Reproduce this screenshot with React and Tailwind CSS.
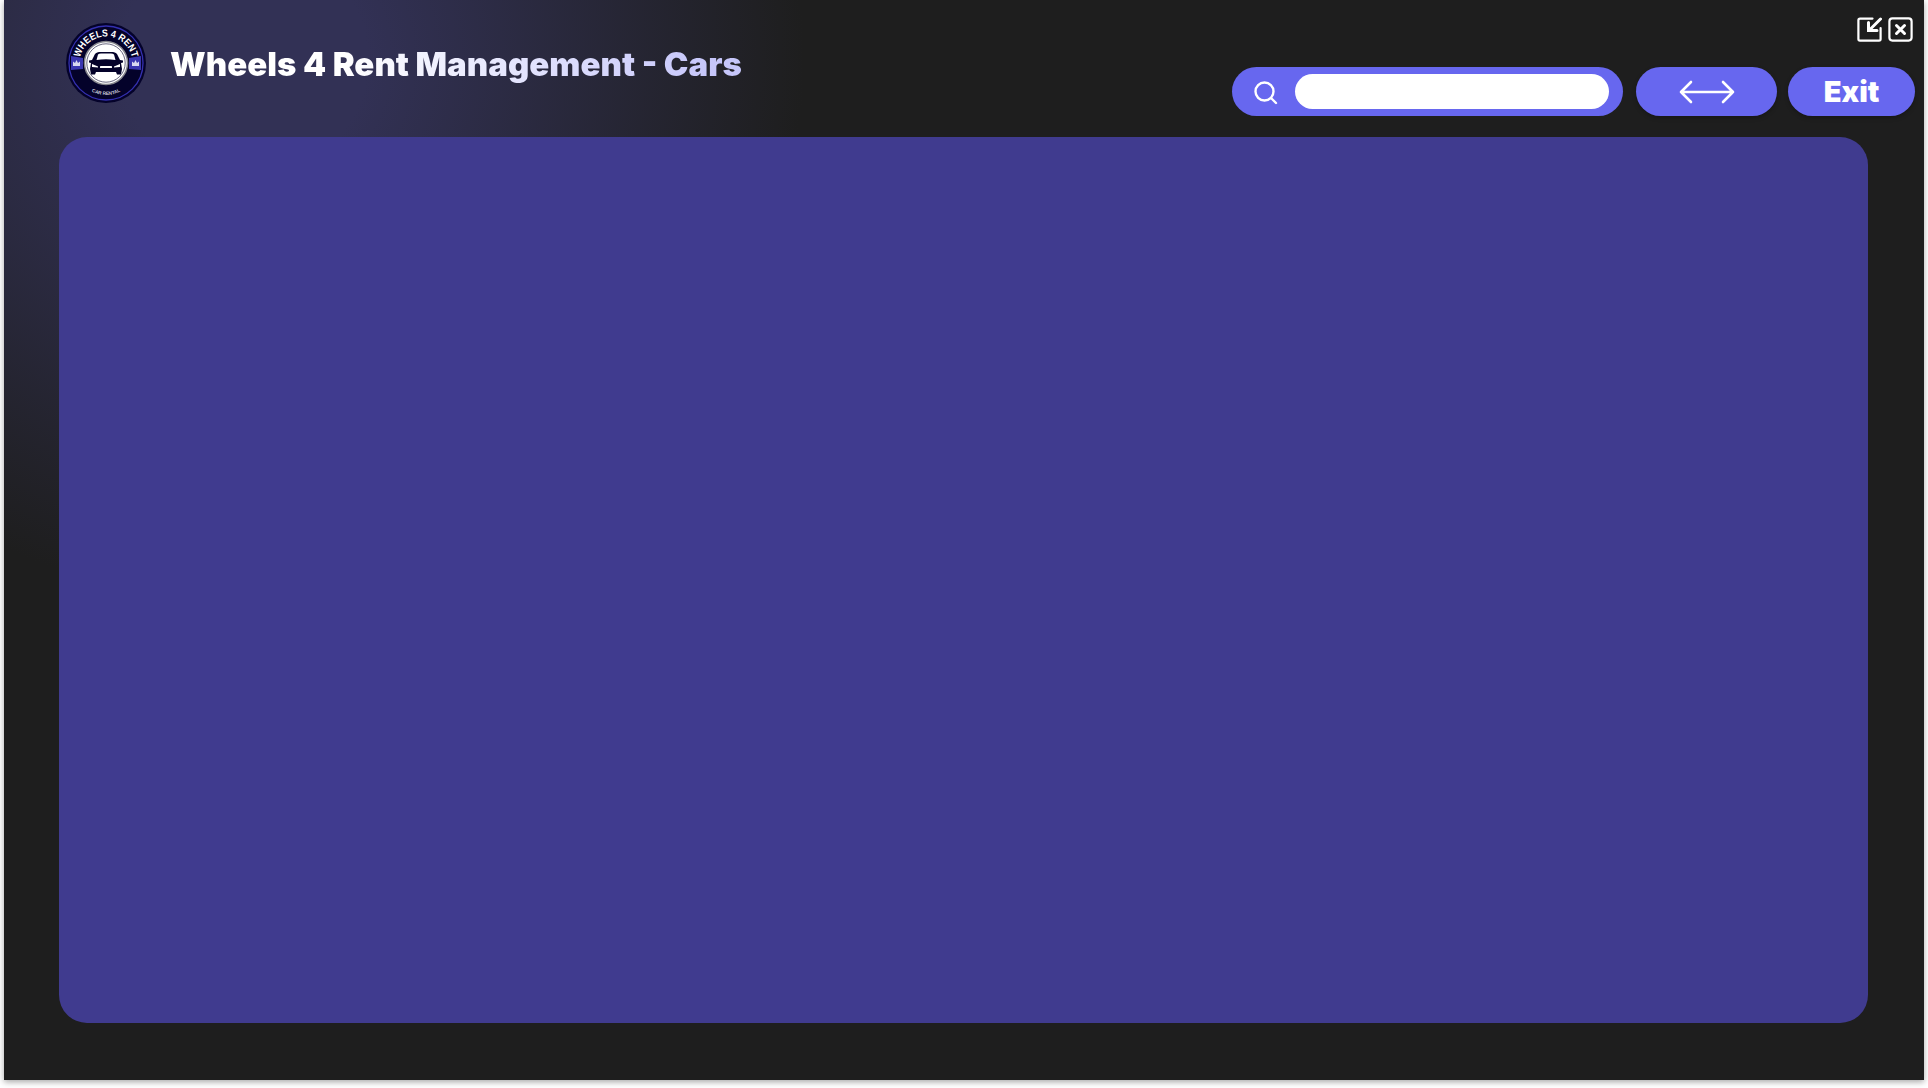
import React from "react";

function Logo() {
  return (
    <svg width="80" height="80" viewBox="0 0 80 80" className="shrink-0">
      <defs>
        <path id="arcTop" d="M 13.5 40 A 26.5 26.5 0 0 1 66.5 40" fill="none" />
        <path id="arcBot" d="M 8 40 A 32 32 0 0 0 72 40" fill="none" />
      </defs>
      <circle cx="40" cy="40" r="40" fill="#04022a" />
      <circle cx="40" cy="40" r="37" fill="none" stroke="#3430b0" strokeWidth="1.3" />
      <polygon points="5,33 17,35 17,46 5,47" fill="#3a36b0" />
      <polygon points="75,33 63,35 63,46 75,47" fill="#3a36b0" />
      <path d="M7 43 L7 38.5 L9 40 L10.5 37 L12 40 L14 38.5 L14 43 Z" fill="#d8d8f0" />
      <path d="M66 43 L66 38.5 L68 40 L69.5 37 L71 40 L73 38.5 L73 43 Z" fill="#d8d8f0" />
      <text fill="#ffffff" fontSize="10" fontWeight="700" fontFamily="'Liberation Sans',sans-serif">
        <textPath href="#arcTop" startOffset="50%" textAnchor="middle" textLength="72" lengthAdjust="spacingAndGlyphs">WHEELS 4 RENT</textPath>
      </text>
      <text fill="#c8c8d8" fontSize="4.8" fontWeight="700" fontFamily="'Liberation Sans',sans-serif">
        <textPath href="#arcBot" startOffset="50%" textAnchor="middle" textLength="30">CAR RENTAL</textPath>
      </text>
      <circle cx="40" cy="40" r="21.5" fill="#ffffff" stroke="#85858c" strokeWidth="1.5" />
      <circle cx="40" cy="40" r="19.2" fill="#ffffff" stroke="#04022a" strokeWidth="0.6" />
      <path d="M28 33 Q29 29.5 33 29 L47 29 Q51 29.5 52 33 L54 37 L57 37.5 L57 39.5 L55 40 L56 46 L55 51.5 L51 51.5 L50 49 L30 49 L29 51.5 L25 51.5 L24 46 L25 40 L23 39.5 L23 37.5 L26 37 Z" fill="#04022a" />
      <path d="M30.5 37 L32 31.5 Q33 30.5 35 30.5 L45 30.5 Q47 30.5 48 31.5 L49.5 37 Q40 35.5 30.5 37 Z" fill="#ffffff" />
      <path d="M26 41 L32 43.5 L32 44.5 L26 44 Z" fill="#ffffff" />
      <path d="M54 41 L48 43.5 L48 44.5 L54 44 Z" fill="#ffffff" />
      <rect x="34" y="43" width="12" height="2" rx="0.6" fill="#ffffff" />
    </svg>
  );
}

function MinIcon() {
  return (
    <svg width="25" height="25" viewBox="0 0 25 25" fill="none" stroke="#ffffff" strokeWidth="2.2" strokeLinecap="round" strokeLinejoin="round">
      <path d="M15.5 1.6 H3 Q1.4 1.6 1.4 3.2 V22 Q1.4 23.6 3 23.6 H22 Q23.6 23.6 23.6 22 V11" />
      <path d="M23.5 2 L12 13.5" strokeWidth="3" />
      <path d="M11.5 5.5 V13.5 H20" strokeWidth="3" strokeLinejoin="miter" />
    </svg>
  );
}

function CloseIcon() {
  return (
    <svg width="25" height="25" viewBox="0 0 25 25" fill="none" stroke="#ffffff" strokeWidth="2.2" strokeLinecap="round">
      <rect x="1.4" y="1.4" width="22.2" height="22.2" rx="3" />
      <path d="M8.5 8.5 L16.5 16.5 M16.5 8.5 L8.5 16.5" strokeWidth="3" />
    </svg>
  );
}

export default function App() {
  return (
    <div className="w-[1928px] h-[1088px] bg-white overflow-hidden pl-[4px]">
      <div className="w-[1920px] h-[1080px] bg-[#1e1e1e] bg-[radial-gradient(ellipse_560px_540px_at_240px_60px,#323155_0%,#323155_22%,#1e1e1e_100%)] shadow-[0_2px_6px_rgba(0,0,0,0.35)] flex flex-col">
        <header className="h-[137px] flex shrink-0 pl-[62px] pr-[9px]">
          <div className="pt-[23px] flex items-start">
            <Logo />
            <h1 className="ml-[24px] mt-[21px] text-[33px] leading-[40px] font-black bg-gradient-to-r from-white from-30% to-[#c6c6fa] to-95% bg-clip-text text-transparent whitespace-nowrap [font-family:Inter,sans-serif]">
              Wheels 4 Rent Management - Cars
            </h1>
          </div>
          <div className="ml-auto flex flex-col items-end">
            <div className="flex gap-[6px] mt-[17px] mr-[2px]">
              <MinIcon />
              <CloseIcon />
            </div>
            <div className="flex mt-[25px] gap-[11px]">
              <div className="w-[391px] h-[49px] mr-[2px] rounded-full bg-[#6767ef] flex items-center pl-[22px] pr-[14px]">
                <svg width="24" height="24" viewBox="0 0 24 24" fill="none" stroke="#ffffff" strokeWidth="2.4" strokeLinecap="round" className="shrink-0 mt-[2px]">
                  <circle cx="10.5" cy="10.5" r="9" />
                  <path d="M17.5 17.5 L22 22" />
                </svg>
                <div className="ml-auto w-[314px] h-[35px] rounded-full bg-white" />
              </div>
              <button className="w-[141px] h-[49px] rounded-full bg-[#6767ef] shadow-[0_2px_4px_rgba(0,0,0,0.25)] flex items-center justify-center">
                <svg width="56" height="24" viewBox="0 0 56 24" fill="none" stroke="#ffffff" strokeWidth="2.6" strokeLinecap="round" strokeLinejoin="round">
                  <path d="M2 12 H54 M12 2 L2 12 L12 22 M44 2 L54 12 L44 22" />
                </svg>
              </button>
              <button className="w-[127px] h-[49px] rounded-full bg-[#6767ef] shadow-[0_2px_4px_rgba(0,0,0,0.25)] text-white text-[29px] leading-[49px] font-black [font-family:Inter,sans-serif]">
                Exit
              </button>
            </div>
          </div>
        </header>
        <main className="w-[1809px] h-[886px] ml-[55px] rounded-[28px] bg-[#403b8f]" />
      </div>
    </div>
  );
}
